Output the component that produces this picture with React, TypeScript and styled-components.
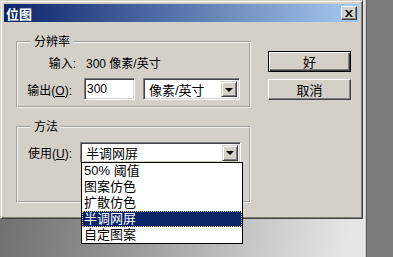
import * as React from 'react'
import styled, { createGlobalStyle } from 'styled-components'

const Global = createGlobalStyle`
  html, body { margin: 0; padding: 0; }
  body {
    width: 393px;
    height: 257px;
    overflow: hidden;
    font-family: "Liberation Sans", "Noto Sans CJK SC", sans-serif;
    font-size: 12px;
    color: #000;
  }
`

const Screen = styled.div`
  display: flex;
  width: 393px;
  height: 257px;
`

const Desk = styled.div`
  width: 365px;
  background: linear-gradient(100deg, #666 0%, #8e8e8e 35%, #c4c4c4 70%, #e6e6e6 95%);
`

const SideStrip = styled.div`
  flex: 1;
  background: #7b7b7b;
  border-left: 1px solid #cacaca;
  box-shadow: inset 1px 0 0 #5e5e5e;
`

const Dialog = styled.div`
  position: relative;
  box-sizing: border-box;
  width: 363px;
  height: 219px;
  padding: 3px;
  background: #d4d0c8;
  border: 1px solid;
  border-color: #d4d0c8 #404040 #404040 #d4d0c8;
  box-shadow: inset 1px 1px 0 #fff, inset -1px -1px 0 #808080;
`

const TitleBar = styled.div`
  display: flex;
  align-items: center;
  justify-content: space-between;
  height: 18px;
  padding: 0 2px;
  background: linear-gradient(to right, #0a246a, #a6caf0);
`

const Title = styled.span`
  color: #fff;
  font-weight: bold;
  font-size: 13px;
`

const CloseBox = styled.div`
  box-sizing: border-box;
  width: 16px;
  height: 14px;
  background: #d4d0c8;
  border: 1px solid;
  border-color: #fff #404040 #404040 #fff;
  box-shadow: inset -1px -1px 0 #808080;
  display: flex;
  align-items: center;
  justify-content: center;
`

const Body = styled.div`
  display: flex;
  padding: 12px 0 0 12px;
`

const Column = styled.div`
  display: flex;
  flex-direction: column;
  gap: 11px;
`

const Group = styled.fieldset<{ $h: number }>`
  box-sizing: border-box;
  width: 235px;
  height: ${p => p.$h}px;
  margin: 0;
  padding: 0;
  border: 2px groove #f4f2ee;
`

const Legend = styled.legend`
  margin-left: 13px;
  padding: 0 3px;
  line-height: 16px;
`

const FormGrid = styled.div<{ $top: number }>`
  display: grid;
  grid-template-columns: 58px 51px auto;
  column-gap: 8px;
  row-gap: 7px;
  align-items: center;
  margin-top: ${p => p.$top}px;
`

const Label = styled.span<{ $shift?: number }>`
  justify-self: end;
  white-space: nowrap;
  margin-right: ${p => p.$shift ?? 0}px;
`

const Value = styled.span`
  grid-column: 2 / 4;
  margin-left: 2px;
`

const Sunken = styled.div<{ $w: number; $h: number; $span?: boolean }>`
  position: relative;
  box-sizing: border-box;
  width: ${p => p.$w}px;
  height: ${p => p.$h}px;
  grid-column: ${p => (p.$span ? '2 / 4' : 'auto')};
  background: #fff;
  border: 1px solid;
  border-color: #808080 #fff #fff #808080;
  box-shadow: inset 1px 1px 0 #404040, inset -1px -1px 0 #d4d0c8;
  display: flex;
  align-items: center;
`

const InputText = styled.span`
  align-self: flex-start;
  padding: 3px 0 0 2px;
  font-size: 12px;
`

const ComboText = styled.span`
  flex: 1;
  padding-left: 5px;
  font-size: 13px;
`

const DropButton = styled.div`
  box-sizing: border-box;
  width: 16px;
  height: 16px;
  margin-right: 2px;
  background: #d4d0c8;
  border: 1px solid;
  border-color: #d4d0c8 #404040 #404040 #d4d0c8;
  box-shadow: inset 1px 1px 0 #fff, inset -1px -1px 0 #808080;
  display: flex;
  align-items: center;
  justify-content: center;
`

const Arrow = styled.div`
  width: 0;
  height: 0;
  border-left: 4px solid transparent;
  border-right: 4px solid transparent;
  border-top: 4px solid #000;
  margin-top: 1px;
`

const ListBox = styled.ul`
  position: absolute;
  top: 100%;
  left: 0;
  z-index: 2;
  box-sizing: border-box;
  width: 162px;
  margin: 0;
  padding: 0;
  list-style: none;
  background: #fff;
  border: 1px solid #000;
`

const ListItem = styled.li<{ $selected?: boolean }>`
  height: 16px;
  line-height: 16px;
  padding-left: 2px;
  font-size: 13px;
  color: ${p => (p.$selected ? '#fff' : '#000')};
  background: ${p => (p.$selected ? '#0a246a' : 'transparent')};
  outline: ${p => (p.$selected ? '1px dotted #e8d27a' : 'none')};
  outline-offset: -1px;
`

const Buttons = styled.div`
  display: flex;
  flex-direction: column;
  gap: 7px;
  margin: 17px 0 0 17px;
`

const Button = styled.div<{ $default?: boolean }>`
  box-sizing: border-box;
  width: 83px;
  height: 21px;
  display: flex;
  align-items: center;
  justify-content: center;
  font-size: 13px;
  background: #d4d0c8;
  border: 1px solid;
  border-color: ${p => (p.$default ? '#000' : '#fff #404040 #404040 #fff')};
  box-shadow: ${p =>
    p.$default
      ? 'inset 1px 1px 0 #fff, inset -1px -1px 0 #404040, inset -2px -2px 0 #808080'
      : 'inset -1px -1px 0 #808080'};
`

const Key = styled.u`
  text-underline-offset: 1px;
`

const methods = ['50% 阈值', '图案仿色', '扩散仿色', '半调网屏', '自定图案']

export default function App() {
  return (
    <Screen>
      <Global />
      <Desk>
        <Dialog>
          <TitleBar>
            <Title>位图</Title>
            <CloseBox>
              <svg width="8" height="7" viewBox="0 0 8 7">
                <path d="M0 0h2l2 2.5L6 0h2L5 3.5 8 7H6L4 4.5 2 7H0l3-3.5z" fill="#000" />
              </svg>
            </CloseBox>
          </TitleBar>
          <Body>
            <Column>
              <Group $h={74}>
                <Legend>分辨率</Legend>
                <FormGrid $top={4}>
                  <Label>输入:</Label>
                  <Value>300 像素/英寸</Value>
                  <Label $shift={4}>
                    输出(<Key>O</Key>):
                  </Label>
                  <Sunken $w={51} $h={22}>
                    <InputText>300</InputText>
                  </Sunken>
                  <Sunken $w={97} $h={22}>
                    <ComboText>像素/英寸</ComboText>
                    <DropButton>
                      <Arrow />
                    </DropButton>
                  </Sunken>
                </FormGrid>
              </Group>
              <Group $h={84}>
                <Legend>方法</Legend>
                <FormGrid $top={7}>
                  <Label $shift={4}>
                    使用(<Key>U</Key>):
                  </Label>
                  <Sunken $w={161} $h={21} $span style={{ marginLeft: -4 }}>
                    <ComboText>半调网屏</ComboText>
                    <DropButton>
                      <Arrow />
                    </DropButton>
                    <ListBox>
                      {methods.map(m => (
                        <ListItem key={m} $selected={m === '半调网屏'}>
                          {m}
                        </ListItem>
                      ))}
                    </ListBox>
                  </Sunken>
                </FormGrid>
              </Group>
            </Column>
            <Buttons>
              <Button $default>好</Button>
              <Button>取消</Button>
            </Buttons>
          </Body>
        </Dialog>
      </Desk>
      <SideStrip />
    </Screen>
  )
}
